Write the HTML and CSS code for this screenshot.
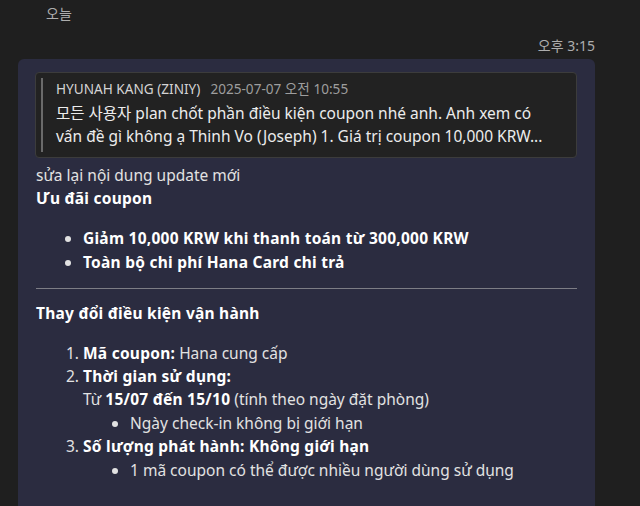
FILE: index.html
```html
<!DOCTYPE html>
<html lang="vi">
<head>
<meta charset="utf-8">
<link rel="stylesheet" href="styles.css">
</head>
<body>
<div class="day">오늘</div>
<div class="time">오후 3:15</div>
<div class="bubble">
  <div class="quote">
    <div class="quote-head"><span class="author">HYUNAH KANG (ZINIY)</span><span class="qdate">2025-07-07 오전 10:55</span></div>
    <div class="quote-body">모든 사용자 plan chốt phần điều kiện coupon nhé anh. Anh xem có vấn đề gì không ạ Thinh Vo (Joseph) 1. Giá trị coupon 10,000 KRW...</div>
  </div>
  <div class="msg">
    <p class="line">sửa lại nội dung update mới</p>
    <p class="line"><b>Ưu đãi coupon</b></p>
    <ul class="list">
      <li><b>Giảm 10,000 KRW khi thanh toán từ 300,000 KRW</b></li>
      <li><b>Toàn bộ chi phí Hana Card chi trả</b></li>
    </ul>
    <hr class="rule">
    <p class="line"><b>Thay đổi điều kiện vận hành</b></p>
    <ol class="olist">
      <li><b>Mã coupon:</b> Hana cung cấp</li>
      <li><b>Thời gian sử dụng:</b>
        <div>Từ <b>15/07 đến 15/10</b> (tính theo ngày đặt phòng)</div>
        <ul class="sub">
          <li>Ngày check-in không bị giới hạn</li>
        </ul>
      </li>
      <li><b>Số lượng phát hành: Không giới hạn</b>
        <ul class="sub">
          <li>1 mã coupon có thể được nhiều người dùng sử dụng</li>
        </ul>
      </li>
    </ol>
  </div>
</div>
</body>
</html>
```

FILE: styles.css
```css
html, body {
  margin: 0;
  padding: 0;
  background: #1f1f1f;
  height: 100%;
  overflow: hidden;
}
body {
  font-family: "Noto Sans", "Noto Sans CJK KR", sans-serif;
  font-size: 15.5px;
  color: #e2e2e2;
}
.day {
  padding-left: 46px;
  padding-top: 4px;
  height: 20px;
  line-height: 20px;
  font-size: 14px;
  color: #adadad;
}
.time {
  text-align: right;
  padding-right: 45px;
  margin-top: 12px;
  height: 20px;
  line-height: 20px;
  font-size: 14px;
  color: #adadad;
}
.bubble {
  margin: 3px 0 0 18px;
  width: 577px;
  box-sizing: border-box;
  background: #2b2c40;
  border-radius: 6px;
  padding: 13px 18px 40px 17px;
}
.quote {
  background: #222222;
  border: 1px solid #3c3c3c;
  border-radius: 4px;
  padding: 5px 22px 9px 20px;
  position: relative;
}
.quote::before {
  content: "";
  position: absolute;
  left: 5px;
  top: 5px;
  bottom: 5px;
  width: 2px;
  background: #6a6a6a;
}
.quote-head {
  font-size: 13.6px;
  line-height: 22px;
  height: 22px;
  white-space: nowrap;
}
.author {
  color: #d4d4d4;
  margin-right: 10px;
}
.qdate {
  color: #9e9e9e;
}
.quote-body {
  margin-top: 1.5px;
  line-height: 23px;
  color: #ececec;
}
.msg {
  line-height: 23.4px;
  padding-left: 1px;
  padding-top: 6px;
}
.line {
  margin: 0;
}
b {
  color: #ffffff;
  font-weight: 700;
  letter-spacing: 0.25px;
}
.list {
  margin: 17px 0 0 0;
  padding-left: 47px;
}
.rule {
  border: none;
  border-top: 1px solid #7d7d85;
  margin: 14px 0 13px 0;
}
.olist {
  margin: 16px 0 0 0;
  padding-left: 47px;
}
.sub {
  margin: 0;
  padding-left: 47px;
  list-style-type: disc;
}
```
